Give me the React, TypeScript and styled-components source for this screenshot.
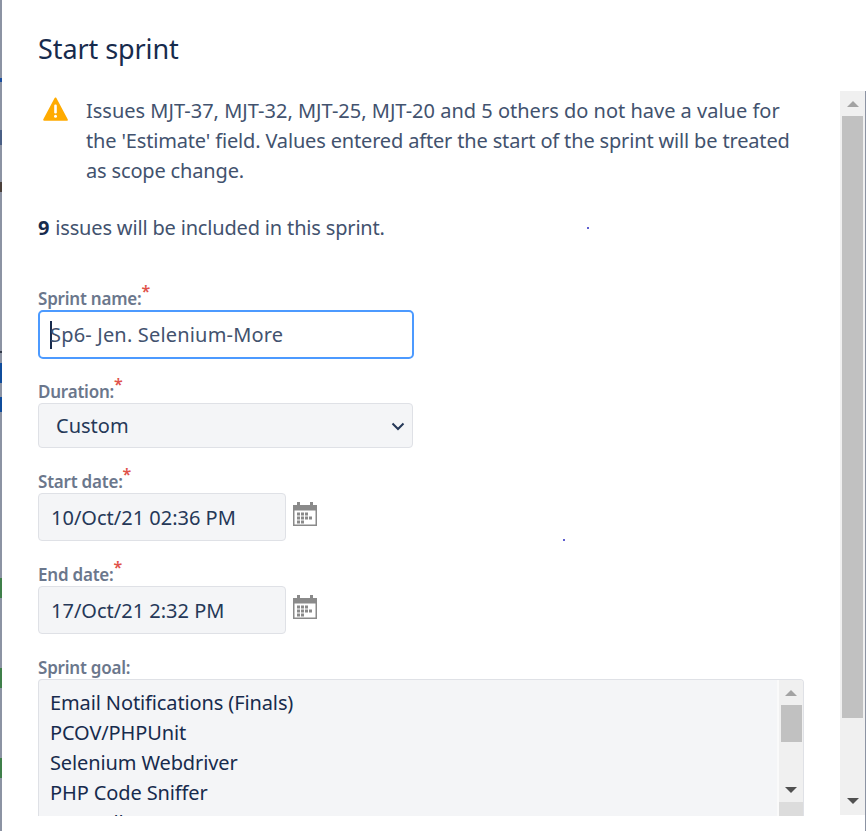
import React from "react";
import styled, { createGlobalStyle } from "styled-components";

const Global = createGlobalStyle`
  html, body { margin: 0; padding: 0; height: 831px; overflow: hidden; background: #fff; }
  * { box-sizing: border-box; }
`;
const Page = styled.div`
  display: flex; width: 866px; height: 831px; background: #fff; overflow: hidden;
  font-family: "Noto Sans", "Open Sans", sans-serif; color: #253858; position: relative;
`;
const BackdropEdge = styled.div`
  width: 2px; flex: none; background: #8c93a3; position: relative;
`;
const EdgeMark = styled.span<{ $top: number; $h: number; $c: string }>`
  position: absolute; left: 0; width: 2px; top: ${(p) => p.$top}px; height: ${(p) => p.$h}px; background: ${(p) => p.$c};
`;
const Dialog = styled.div`flex: 1; display: flex; flex-direction: column; min-width: 0;`;
const Title = styled.h1`
  margin: 0; height: 91px; padding: 31px 0 0 36px; font-size: 27px; line-height: 36px; letter-spacing: -0.08px;
  font-weight: 400; color: #172b4d;
`;
const BodyRow = styled.div`flex: 1; display: flex; min-height: 0;`;
const Content = styled.div`flex: 1; min-width: 0; padding: 0 0 0 36px; height: 725px; overflow: hidden;`;
const Warning = styled.div`display: flex; gap: 18px; padding-left: 5px; width: 770px;`;
const WarnIcon = styled.svg`width: 25px; height: 25px; flex: none; margin-top: 6px;`;
const WarnText = styled.p`margin: 5px 0 0; font-size: 20px; line-height: 30px; color: #42526e; white-space: nowrap;`;
const WarnLine = styled.span<{ $ls: number }>`display: block; letter-spacing: ${(p) => p.$ls}px;`;
const Summary = styled.p`margin: 27px 0 0; font-size: 20px; line-height: 30px; color: #42526e; letter-spacing: -0.17px;
  b { font-weight: 700; color: #172b4d; margin-right: 1px; }`;
const Field = styled.div<{ $top: number }>`margin-top: ${(p) => p.$top}px;`;
const Label = styled.label`display: block; font-size: 17px; line-height: 22px; font-weight: 600; color: #6b778c; letter-spacing: -0.22px;
  sup { color: #e0524a; font-size: 16px; line-height: 0; font-weight: 600; position: relative; top: -1px; vertical-align: super; }`;
const NameInput = styled.div`
  width: 376px; height: 49px; border: 2px solid #4c9aff; border-radius: 5px; background: #fff;
  display: flex; align-items: center; padding-left: 10px; font-size: 20px; color: #42526e; letter-spacing: 0.18px;
  i { width: 2px; height: 28px; background: #172b4d; margin-right: -2px; flex: none; }
`;
const SelectBox = styled.div`
  width: 375px; height: 45px; border: 1px solid #dfe1e6; border-radius: 4px; background: #f4f5f7;
  display: flex; align-items: center; justify-content: space-between; padding: 0 6px 0 17px; font-size: 20px; color: #253858;
`;
const DateRow = styled.div`display: flex; align-items: flex-start; gap: 7px;`;
const DateBox = styled.div`
  width: 248px; height: 48px; border: 1px solid #dfe1e6; border-radius: 4px; background: #f4f5f7;
  display: flex; align-items: center; padding-left: 12px; font-size: 20px; color: #253858;
`;
const CalIcon = styled.svg`width: 24px; height: 24px; flex: none; margin-top: 9px;`;
const GoalBox = styled.div`
  width: 766px; height: 137px; border: 1px solid #dfe1e6; border-bottom: 0; border-radius: 4px 4px 0 0;
  background: #f4f5f7; display: flex; overflow: hidden;
`;
const GoalText = styled.div`flex: 1; padding: 8px 11px; font-size: 20px; line-height: 30px; color: #172b4d; white-space: nowrap; letter-spacing: -0.12px;`;
const Track = styled.div<{ $width: number }>`
  width: ${(p) => p.$width}px; flex: none; background: #f0f0f0;
  display: flex; flex-direction: column; align-items: center;
`;
const GoalTrack = styled(Track)`border-left: 2px solid #fafafa;`;
const Arrow = styled.div<{ $down?: boolean; $top?: number }>`
  width: 0; height: 0; border-left: 6px solid transparent; border-right: 6px solid transparent; flex: none;
  margin-top: ${(p) => p.$top ?? 0}px;
  ${(p) => (p.$down ? `border-top: 6px solid #505050;` : `border-bottom: 6px solid #a3a3a3;`)}
`;
const Thumb = styled.div<{ $h: number; $w: number; $mt: number }>`
  width: ${(p) => p.$w}px; height: ${(p) => p.$h}px; margin-top: ${(p) => p.$mt}px; background: #c1c1c1; flex: none;
`;
const Spacer = styled.div`flex: 1;`;
const BottomGap = styled.div`flex: none; height: 11px;`;
const ScrollCol = styled.div`height: 724px; display: flex;`;
const RightEdge = styled.div`width: 1px; flex: none; background: #8c93a3;`;
const Corner = styled.div`width: 100%; height: 14px; margin-top: 9px; background: #dcdcdc; flex: none;`;
const Dot = styled.span<{ $x: number; $y: number }>`
  position: absolute; left: ${(p) => p.$x}px; top: ${(p) => p.$y}px; width: 2px; height: 2px; background: #2a2ac0; border-radius: 50%;
`;

const Calendar = () => (
  <CalIcon viewBox="0 0 24 24">
    <path fill="#8a8a8a" fillRule="evenodd" d="M0 3h4V0h3v3h10V0h3v3h4v21H0zM1.500 8.500v14h21v-14z" />
    <path fill="#8a8a8a" d="M4 10.500h3v3H4zM8 10.500h3v3H8zM12 10.500h3v3h-3zM4 14.500h3v3H4zM8 14.500h3v3H8zM12 14.500h3v3h-3zM16 14.500h3v3h-3zM4 18.500h3v3H4zM8 18.500h3v3H8z" />
  </CalIcon>
);

const marks: [number, number, string][] = [
  [78, 4, "#1a4fa0"], [130, 15, "#4a5f85"], [182, 10, "#4a3f3a"], [351, 2, "#333a4a"],
  [363, 20, "#0f4c9c"], [397, 15, "#0f4c9c"], [578, 20, "#3f7f4a"], [668, 20, "#3f7f4a"], [758, 20, "#3f7f4a"],
];

export default function App() {
  return (
    <Page>
      <Global />
      <BackdropEdge>
        {marks.map(([top, h, c]) => <EdgeMark key={top} $top={top} $h={h} $c={c} />)}
      </BackdropEdge>
      <Dialog>
        <Title>Start sprint</Title>
        <BodyRow>
          <Content>
            <Warning>
              <WarnIcon viewBox="0 0 25 25">
                <path fill="#ffab00" stroke="#ffab00" strokeWidth="2" strokeLinejoin="round" d="M12.500 1.500 23.800 22.800H1.200z" />
                <rect x="11.200" y="7.500" width="2.600" height="9" rx="1.200" fill="#fff" />
                <circle cx="12.500" cy="19.300" r="1.500" fill="#fff" />
              </WarnIcon>
              <WarnText>
                <WarnLine $ls={0}>Issues MJT-37, MJT-32, MJT-25, MJT-20 and 5 others do not have a value for</WarnLine>
                <WarnLine $ls={-0.16}>the 'Estimate' field. Values entered after the start of the sprint will be treated</WarnLine>
                <WarnLine $ls={-0.16}>as scope change.</WarnLine>
              </WarnText>
            </Warning>
            <Summary><b>9</b> issues will be included in this sprint.</Summary>
            <Field $top={45}>
              <Label>Sprint name:<sup>*</sup></Label>
              <NameInput><i />Sp6- Jen. Selenium-More</NameInput>
            </Field>
            <Field $top={22}>
              <Label>Duration:<sup>*</sup></Label>
              <SelectBox>
                Custom
                <svg width="16" height="16" viewBox="0 0 16 16"><path d="M2.500 5.500 8 11l5.500-5.500" fill="none" stroke="#253858" strokeWidth="2" /></svg>
              </SelectBox>
            </Field>
            <Field $top={23}>
              <Label>Start date:<sup>*</sup></Label>
              <DateRow><DateBox>10/Oct/21 02:36 PM</DateBox><Calendar /></DateRow>
            </Field>
            <Field $top={23}>
              <Label>End date:<sup>*</sup></Label>
              <DateRow><DateBox>17/Oct/21 2:32 PM</DateBox><Calendar /></DateRow>
            </Field>
            <Field $top={23}>
              <Label>Sprint goal:</Label>
              <GoalBox>
                <GoalText>
                  Email Notifications (Finals)<br />PCOV/PHPUnit<br />Selenium Webdriver<br />PHP Code Sniffer<br />Controllers
                </GoalText>
                <GoalTrack $width={26}>
                  <Arrow $top={10} />
                  <Thumb $w={21} $h={37} $mt={9} />
                  <Spacer />
                  <Arrow $down />
                  <Corner />
                </GoalTrack>
              </GoalBox>
            </Field>
          </Content>
          <ScrollCol>
            <Track $width={25}>
              <Arrow $top={10} />
              <Thumb $w={21} $h={602} $mt={9} />
              <Spacer />
              <Arrow $down />
              <BottomGap />
            </Track>
          </ScrollCol>
          <RightEdge />
        </BodyRow>
      </Dialog>
      <Dot $x={587} $y={227} />
      <Dot $x={563} $y={539} />
    </Page>
  );
}
